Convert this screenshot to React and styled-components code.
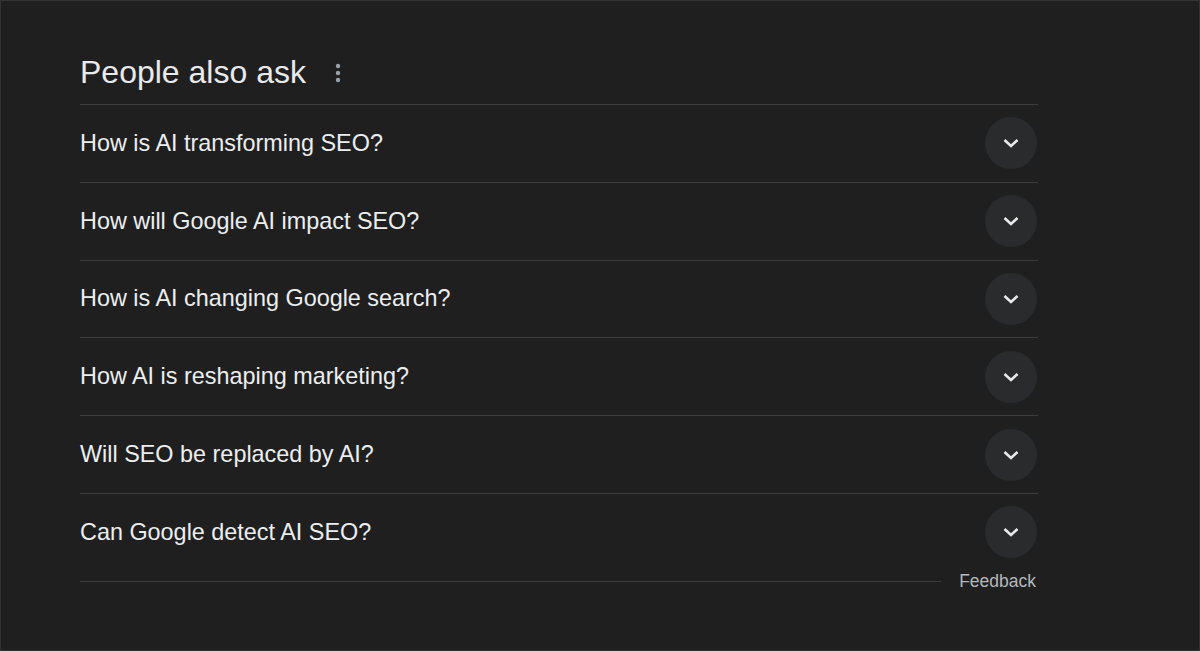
import React from "react";
import styled, { createGlobalStyle } from "styled-components";

const GlobalStyle = createGlobalStyle`
  html, body {
    margin: 0;
    padding: 0;
    background: #1f1f1f;
  }
  body {
    font-family: "Liberation Sans", Arial, sans-serif;
    color: #e8eaed;
  }
`;

const questions = [
  "How is AI transforming SEO?",
  "How will Google AI impact SEO?",
  "How is AI changing Google search?",
  "How AI is reshaping marketing?",
  "Will SEO be replaced by AI?",
  "Can Google detect AI SEO?",
];

const Page = styled.div`
  width: 1200px;
  height: 651px;
  box-sizing: border-box;
  padding: 40px 161px 0 79px;
  background: #1f1f1f;
  border: 1px solid #333;
`;

const Header = styled.div`
  display: flex;
  align-items: center;
  height: 63px;
  border-bottom: 1px solid #3c3c3c;
`;

const Title = styled.h2`
  margin: 0;
  font-size: 32px;
  font-weight: 400;
  color: #e8eaed;
`;

const MoreButton = styled.div`
  display: flex;
  align-items: center;
  justify-content: center;
  margin-left: 24px;
  width: 16px;
  height: 24px;
`;

const Row = styled.div`
  display: flex;
  align-items: center;
  justify-content: space-between;
  height: 76.8px;
  border-bottom: ${(p) => (p.$last ? "none" : "1px solid #3c3c3c")};
`;

const Question = styled.span`
  font-size: 23.4px;
  color: #eceef0;
`;

const Chevron = styled.div`
  width: 52px;
  height: 52px;
  border-radius: 50%;
  background: #2a2b2d;
  display: flex;
  align-items: center;
  justify-content: center;
  margin-right: 1px;
`;

const Footer = styled.div`
  display: flex;
  align-items: center;
  gap: 18px;
  height: 21px;
`;

const FooterLine = styled.div`
  flex: 1;
  height: 1px;
  background: #3c3c3c;
`;

const Feedback = styled.span`
  font-size: 17.5px;
  color: #b4b7bb;
  padding-right: 2px;
`;

const DotsIcon = () => (
  <svg width="6" height="20" viewBox="0 0 6 20">
    <circle cx="3" cy="3" r="2.2" fill="#9aa0a6" />
    <circle cx="3" cy="10" r="2.2" fill="#9aa0a6" />
    <circle cx="3" cy="17" r="2.2" fill="#9aa0a6" />
  </svg>
);

const ChevronIcon = () => (
  <svg width="18" height="12" viewBox="0 0 18 12">
    <path d="M2.5 3 L9 9 L15.5 3" fill="none" stroke="#e8eaed" strokeWidth="2.6" />
  </svg>
);

export default function App() {
  return (
    <>
      <GlobalStyle />
      <Page>
        <Header>
          <Title>People also ask</Title>
          <MoreButton>
            <DotsIcon />
          </MoreButton>
        </Header>
        {questions.map((q, i) => (
          <Row key={q} $last={i === questions.length - 1}>
            <Question>{q}</Question>
            <Chevron>
              <ChevronIcon />
            </Chevron>
          </Row>
        ))}
        <Footer>
          <FooterLine />
          <Feedback>Feedback</Feedback>
        </Footer>
      </Page>
    </>
  );
}
